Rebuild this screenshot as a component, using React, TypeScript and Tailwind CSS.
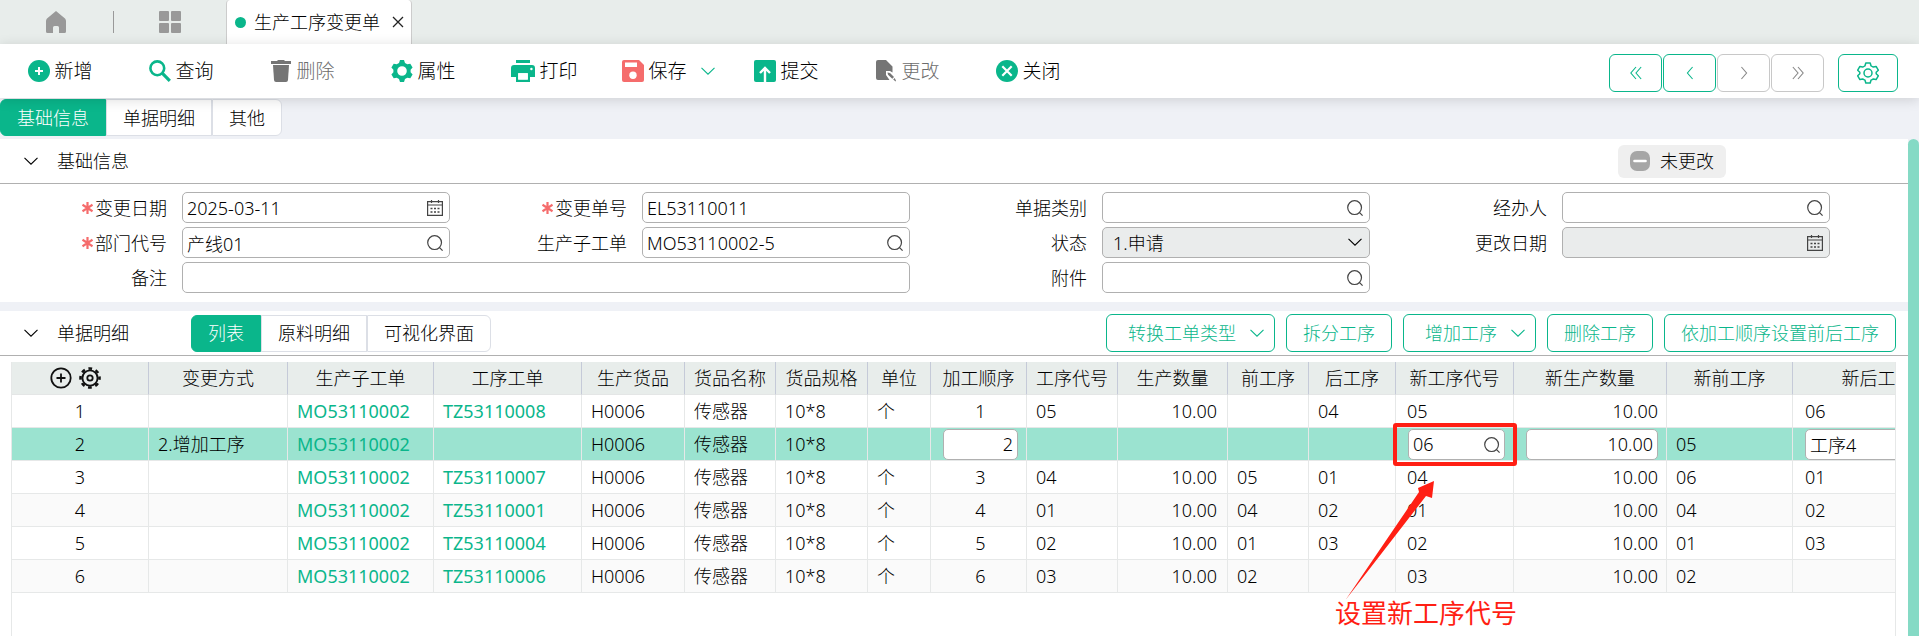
import { ReactNode } from 'react';
import { twMerge as tw } from 'tailwind-merge';

type IconProps = { className?: string };

const HomeIcon = () => (
    <svg className="w-[22px] h-6 text-[#999999]" viewBox="0 0 22 24" fill="currentColor">
        <path d="M11 1 L20 8.5 Q21 9.5 21 11 V21.5 Q21 23 19.5 23 H14 V17.5 Q14 16 12.5 16 H9.5 Q8 16 8 17.5 V23 H2.5 Q1 23 1 21.5 V11 Q1 9.5 2 8.5 Z" />
    </svg>
);

const GridIcon = () => (
    <svg className="w-6 h-6 text-[#999999]" viewBox="0 0 24 24" fill="currentColor">
        <rect x="1" y="1" width="10" height="10" rx="1" />
        <rect x="13" y="1" width="10" height="10" rx="1" />
        <rect x="1" y="13" width="10" height="10" rx="1" />
        <rect x="13" y="13" width="10" height="10" rx="1" />
    </svg>
);

const AddIcon = () => (
    <svg className="w-[22px] h-[22px]" viewBox="0 0 22 22">
        <circle cx="11" cy="11" r="11" fill="#0ab68b" />
        <path d="M11 7 V15 M7 11 H15" stroke="#fff" strokeWidth="2" />
    </svg>
);

const QueryIcon = () => (
    <svg className="w-[22px] h-[22px]" viewBox="0 0 22 22" fill="none" stroke="#0ab68b">
        <circle cx="8.3" cy="8.3" r="6.9" strokeWidth="2.6" />
        <path d="M13.2 13.2 L20.8 20.8" strokeWidth="3.2" />
    </svg>
);

const TrashIcon = () => (
    <svg className="w-[22px] h-[22px]" viewBox="0 0 22 22" fill="#757575">
        <path d="M1 1 H7 L8 0 H14 L15 1 H21 V4 H1 Z" />
        <path d="M3 5 H19 L18 20 Q17.8 22 16 22 H6 Q4.2 22 4 20 Z" />
    </svg>
);

const GearIcon = () => (
    <svg className="w-[22px] h-[22px]" viewBox="0 0 22 22" fill="#0ab68b">
        <path
            fillRule="evenodd"
            d="M9 0 H13 L14 3 L16.3 4.3 L19.3 3.7 L21.6 7.6 L19.6 9.8 V12.2 L21.6 14.4 L19.3 18.3 L16.3 17.7 L14 19 L13 22 H9 L8 19 L5.7 17.7 L2.7 18.3 L0.4 14.4 L2.4 12.2 V9.8 L0.4 7.6 L2.7 3.7 L5.7 4.3 L8 3 Z M11 6.2 A4.8 4.8 0 1 0 11 15.8 A4.8 4.8 0 1 0 11 6.2 Z"
        />
    </svg>
);

const PrintIcon = () => (
    <svg className="w-6 h-[22px]" viewBox="0 0 24 22" fill="#0ab68b">
        <rect x="5" y="0" width="14" height="3" />
        <path d="M3 5 H21 Q24 5 24 8 V17 H19 V13 H5 V17 H0 V8 Q0 5 3 5 Z" />
        <path d="M5 11 H19 V22 H5 Z M7.2 13.2 V19.6 H16.8 V13.2 Z" fillRule="evenodd" />
        <rect x="7.2" y="13.2" width="9.6" height="6.4" fill="#fff" />
        <circle cx="20.4" cy="9" r="1.2" fill="#fff" />
    </svg>
);

const SaveIcon = () => (
    <svg className="w-[22px] h-[22px]" viewBox="0 0 22 22">
        <path d="M2 0 H17 L22 5 V20 Q22 22 20 22 H2 Q0 22 0 20 V2 Q0 0 2 0 Z" fill="#f56c6c" />
        <rect x="3" y="2.5" width="12" height="4.5" fill="#fff" />
        <circle cx="11" cy="15.3" r="3.7" fill="#fff" />
    </svg>
);

const SubmitIcon = () => (
    <svg className="w-[22px] h-[22px]" viewBox="0 0 22 22">
        <rect width="22" height="22" rx="2" fill="#0ab68b" />
        <path d="M11 22 V9 M6 13 L11 8 L16 13" fill="none" stroke="#fff" strokeWidth="2.4" />
    </svg>
);

const ChangeIcon = () => (
    <svg className="w-[22px] h-[22px]" viewBox="0 0 22 22">
        <path d="M3 0 H11 L17.5 6.5 V12.5 L15 11 H11 V15 L14.5 20 H3 Q1 20 1 18 V2 Q1 0 3 0 Z" fill="#757575" />
        <path d="M12.5 12.5 L15 13 L19 17 L17.3 18.8 L13 14.8 Z M18.2 19.4 L19.7 18 L21 20.8 L20.6 21.5 Z" fill="#757575" />
    </svg>
);

const CloseIcon = () => (
    <svg className="w-[22px] h-[22px]" viewBox="0 0 22 22">
        <circle cx="11" cy="11" r="11" fill="#0ab68b" />
        <path d="M6.3 6.3 L15.7 15.7 M15.7 6.3 L6.3 15.7" stroke="#fff" strokeWidth="2.2" />
    </svg>
);

const ChevronDown = ({ className }: IconProps) => (
    <svg className={tw('w-[14px] h-[14px] shrink-0', className)} viewBox="0 0 14 14" fill="none" stroke="currentColor">
        <path d="M0.5 3.8 L7 10.2 L13.5 3.8" strokeWidth="1.1" />
    </svg>
);

const SearchIcon = ({ className }: IconProps) => (
    <svg className={tw('w-4 h-4 text-[#444444]', className)} viewBox="0 0 16 16" fill="none" stroke="currentColor">
        <circle cx="7.6" cy="7.6" r="6.9" strokeWidth="1.2" />
        <path d="M12.3 12.3 L15.6 15.6" strokeWidth="1.2" />
    </svg>
);

const CalendarIcon = ({ className }: IconProps) => (
    <svg className={tw('w-4 h-4 text-[#444444]', className)} viewBox="0 0 16 16" fill="none" stroke="currentColor">
        <path d="M0.6 1.6 H15.4 V15.4 H0.6 Z M0.6 5 H15.4 M4.5 0 V3 M11.5 0 V3" strokeWidth="1.2" />
        <path d="M3.5 8.5 H12.5 M3.5 12 H12.5" strokeWidth="1.6" strokeDasharray="2 1.5" />
    </svg>
);

const OutlineGear = () => (
    <svg className="w-[22px] h-[22px]" viewBox="0 0 22 22" fill="none" stroke="#0ab68b" strokeWidth="1.5">
        <path
            d="M8.8 1 H13.2 L14 3.8 Q15.2 4.4 16.3 5.1 L19.1 4.4 L21.3 8.2 L19.2 10.2 V11.8 L21.3 13.8 L19.1 17.6 L16.3 16.9 Q15.2 17.6 14 18.2 L13.2 21 H8.8 L8 18.2 Q6.8 17.6 5.7 16.9 L2.9 17.6 L0.7 13.8 L2.8 11.8 V10.2 L0.7 8.2 L2.9 4.4 L5.7 5.1 Q6.8 4.4 8 3.8 Z"
            strokeLinejoin="round"
        />
        <circle cx="11" cy="11" r="4" />
    </svg>
);

const tools: { label: string; icon: ReactNode; disabled?: boolean; menu?: boolean }[] = [
    { label: '新增', icon: <AddIcon /> },
    { label: '查询', icon: <QueryIcon /> },
    { label: '删除', icon: <TrashIcon />, disabled: true },
    { label: '属性', icon: <GearIcon /> },
    { label: '打印', icon: <PrintIcon /> },
    { label: '保存', icon: <SaveIcon />, menu: true },
    { label: '提交', icon: <SubmitIcon /> },
    { label: '更改', icon: <ChangeIcon />, disabled: true },
    { label: '关闭', icon: <CloseIcon /> },
];

const pagers = [
    { label: '首张', path: 'M7 1 L1 8 L7 15 M13 1 L7 8 L13 15' },
    { label: '上一张', path: 'M10 1 L4 8 L10 15' },
    { label: '下一张', path: 'M4 1 L10 8 L4 15', disabled: true },
    { label: '末张', path: 'M1 1 L7 8 L1 15 M7 1 L13 8 L7 15', disabled: true },
];

type FieldProps = {
    id: string;
    label: string;
    value?: string;
    required?: boolean;
    disabled?: boolean;
    icon?: 'search' | 'calendar';
    wide?: boolean;
};

const Field = ({ id, label, value = '', required, disabled, icon, wide }: FieldProps) => (
    <div className={tw('flex items-center gap-[15px] pr-[10px]', wide && 'col-span-2')}>
        <label htmlFor={id} className="flex w-[167px] shrink-0 items-center justify-end gap-[2px] whitespace-nowrap">
            {required && (
                <svg className="w-[11px] h-3" viewBox="0 0 11 12" stroke="#f56c6c" strokeWidth="2.2">
                    <path d="M5.5 0 V12 M0.5 2.8 L10.5 9.2 M10.5 2.8 L0.5 9.2" />
                </svg>
            )}
            {label}
        </label>
        <div className="relative flex-1">
            <input
                id={id}
                type="text"
                defaultValue={value}
                disabled={disabled}
                className="block w-full h-[31px] rounded-[5px] border border-[#b0b0b0] bg-white pl-1 pr-8 outline-none disabled:bg-[#eaecec]"
            />
            {icon === 'search' && <SearchIcon className="absolute right-[7px] top-2" />}
            {icon === 'calendar' && <CalendarIcon className="absolute right-[7px] top-2" />}
        </div>
    </div>
);

const Segmented = ({ items }: { items: string[] }) => (
    <div className="flex h-[37px]">
        {items.map((item, i) => (
            <button
                key={item}
                type="button"
                className={tw(
                    'border border-l-white border-[#dcdfe6] bg-white px-4 whitespace-nowrap last:rounded-r-md',
                    i === 0 && 'rounded-l-md border-[#0ab68b] border-l-[#0ab68b] bg-[#0ab68b] text-white',
                )}
            >
                {item}
            </button>
        ))}
    </div>
);

const ActionButton = ({ label, menu }: { label: string; menu?: boolean }) => (
    <button
        type="button"
        className={tw(
            'flex h-[38px] items-center rounded-md border border-[#0ab68b] px-4 text-[#0ab68b] whitespace-nowrap',
            menu && 'gap-[14px] pl-[21px] pr-[10px]',
        )}
    >
        {label}
        {menu && <ChevronDown />}
    </button>
);

const columns = [
    { title: '变更方式', col: 'w-[139px]' },
    { title: '生产子工单', col: 'w-[146px]', cell: 'font-normal text-[#0ab68b]' },
    { title: '工序工单', col: 'w-[148px]', cell: 'font-normal text-[#0ab68b]' },
    { title: '生产货品', col: 'w-[103px]' },
    { title: '货品名称', col: 'w-[91px]' },
    { title: '货品规格', col: 'w-[92px]' },
    { title: '单位', col: 'w-[63px]' },
    { title: '加工顺序', col: 'w-[96px]', cell: 'text-center pl-1' },
    { title: '工序代号', col: 'w-[91px]' },
    { title: '生产数量', col: 'w-[110px]', cell: 'text-right pr-[10px]' },
    { title: '前工序', col: 'w-[81px]' },
    { title: '后工序', col: 'w-[87px]' },
    { title: '新工序代号', col: 'w-[118px]', cell: 'pl-[11px]' },
    { title: '新生产数量', col: 'w-[153px]', cell: 'text-right pr-2' },
    { title: '新前工序', col: 'w-[126px]' },
    { title: '新后工序', col: 'w-[170px]', cell: 'pl-3' },
];

const rows = [
    ['', 'MO53110002', 'TZ53110008', 'H0006', '传感器', '10*8', '个', '1', '05', '10.00', '', '04', '05', '10.00', '', '06'],
    ['2.增加工序', 'MO53110002', '', 'H0006', '传感器', '10*8', '', '2', '', '', '', '', '06', '10.00', '05', '工序4'],
    ['', 'MO53110002', 'TZ53110007', 'H0006', '传感器', '10*8', '个', '3', '04', '10.00', '05', '01', '04', '10.00', '06', '01'],
    ['', 'MO53110002', 'TZ53110001', 'H0006', '传感器', '10*8', '个', '4', '01', '10.00', '04', '02', '01', '10.00', '04', '02'],
    ['', 'MO53110002', 'TZ53110004', 'H0006', '传感器', '10*8', '个', '5', '02', '10.00', '01', '03', '02', '10.00', '01', '03'],
    ['', 'MO53110002', 'TZ53110006', 'H0006', '传感器', '10*8', '个', '6', '03', '10.00', '02', '', '03', '10.00', '02', ''],
];

const activeRow = 1;
const editable = ['加工顺序', '新工序代号', '新生产数量', '新后工序'];

const CellInput = ({ title, value }: { title: string; value: string }) => (
    <div className="relative">
        <input
            type="text"
            aria-label={title}
            defaultValue={value}
            className={tw(
                'block w-full h-[31px] rounded-[5px] border border-[#b0b0b0] bg-white px-1 text-black outline-none',
                (title === '加工顺序' || title === '新生产数量') && 'text-right',
            )}
        />
        {title === '新工序代号' && <SearchIcon className="absolute right-[5px] top-2" />}
    </div>
);

const DetailTable = () => (
    <table className="w-[1951px] table-fixed border-separate border-spacing-0">
        <thead>
            <tr className="h-[33px] bg-[#e8edeb]">
                <th className="w-[137px] border-r border-b border-r-[#c5cad8] border-b-[#e4e6e6] p-0">
                    <div className="flex items-center justify-center gap-[7px] pr-[10px]">
                        <button type="button" aria-label="新增行">
                            <svg className="w-[22px] h-[22px]" viewBox="0 0 22 22" fill="none" stroke="#111">
                                <circle cx="11" cy="11" r="9.7" strokeWidth="1.8" />
                                <path d="M11 6.5 V15.5 M6.5 11 H15.5" strokeWidth="1.8" />
                            </svg>
                        </button>
                        <button type="button" aria-label="表格设置">
                            <svg className="w-[22px] h-[22px]" viewBox="0 0 22 22" fill="none" stroke="#111">
                                <circle cx="11" cy="11" r="7.6" strokeWidth="1.9" />
                                <circle cx="11" cy="11" r="2.7" strokeWidth="1.8" />
                                <circle cx="11" cy="11" r="9.5" strokeWidth="2.6" strokeDasharray="3.73 3.73" strokeDashoffset="1.86" />
                            </svg>
                        </button>
                    </div>
                </th>
                {columns.map(({ title, col }) => (
                    <th
                        key={title}
                        className={tw(
                            'border-r border-b border-r-[#c5cad8] border-b-[#e4e6e6] p-0 font-light whitespace-nowrap',
                            col,
                        )}
                    >
                        {title}
                    </th>
                ))}
            </tr>
        </thead>
        <tbody>
            {rows.map((row, r) => (
                <tr
                    key={r}
                    className={tw(
                        'h-[33px]',
                        r > activeRow && r % 2 === 1 && 'bg-[#fafafa]',
                        r === activeRow && 'bg-[#9be3d0]',
                    )}
                >
                    <td className="border-r border-b border-[#e6e8e8] p-0 text-center">{r + 1}</td>
                    {columns.map(({ title, cell }, c) => {
                        const isInput = r === activeRow && editable.includes(title);
                        return (
                            <td
                                key={title}
                                className={tw(
                                    'border-r border-b border-[#e6e8e8] p-0 pl-[9px] whitespace-nowrap',
                                    cell,
                                    isInput && 'pl-3 pr-2',
                                )}
                            >
                                {isInput ? <CellInput title={title} value={row[c]} /> : row[c]}
                            </td>
                        );
                    })}
                </tr>
            ))}
        </tbody>
    </table>
);

const Annotation = () => (
    <>
        <div className="absolute left-[1381px] top-[61px] w-[124px] h-[43px] rounded-[3px] border-4 border-[#ff1f14]" />
        <svg className="absolute left-[1333px] top-[118px] w-[92px] h-[122px]" viewBox="0 0 92 122" fill="#ff1f14">
            <path d="M0.5 120 L74 12 L73 8 L89 1 L87 18 L81 16 Z" />
        </svg>
        <div className="absolute left-[1323px] top-[234px] text-[26px] leading-[34px] font-normal text-[#ff1f14] whitespace-nowrap">
            设置新工序代号
        </div>
    </>
);

const App = () => {
    return (
        <div className="flex flex-col h-screen overflow-hidden bg-[#eff1f6] text-[18px] leading-6 font-light text-black font-['Noto_Sans','Noto_Sans_CJK_SC',sans-serif]">
            <nav className="flex h-11 shrink-0 items-center bg-[#e8edeb]">
                <div className="flex w-[226px] items-center pl-[45px]">
                    <a href="#home" aria-label="首页">
                        <HomeIcon />
                    </a>
                    <div className="ml-[46px] h-[22px] w-px bg-[#999999]" />
                    <a href="#apps" aria-label="应用" className="ml-[44px]">
                        <GridIcon />
                    </a>
                </div>
                <div className="flex h-full items-center rounded-t-sm border-x border-[#cccccc] bg-white pl-2 pr-[7px]">
                    <div className="h-[11px] w-[11px] rounded-full bg-[#0ab68b]" />
                    <a href="#change-order" className="ml-2 whitespace-nowrap">
                        生产工序变更单
                    </a>
                    <button type="button" aria-label="关闭标签" className="ml-3">
                        <svg className="w-3 h-3" viewBox="0 0 12 12" stroke="#222" strokeWidth="1.3">
                            <path d="M1 1 L11 11 M11 1 L1 11" />
                        </svg>
                    </button>
                </div>
            </nav>

            <header className="relative z-10 flex h-[54px] shrink-0 items-center justify-between bg-white pr-[21px] shadow-[0_2px_12px_rgba(0,0,0,0.14)]">
                <div className="flex h-full items-center">
                    {tools.map(({ label, icon, disabled, menu }) => (
                        <button
                            key={label}
                            type="button"
                            disabled={disabled}
                            className={tw(
                                'flex w-[121px] items-center justify-center gap-1 text-[19px] text-black disabled:text-[#6c6c6c] whitespace-nowrap',
                                menu && 'pl-[6px]',
                            )}
                        >
                            {icon}
                            {label}
                            {menu && <ChevronDown className="ml-[10px] text-[#0ab68b]" />}
                        </button>
                    ))}
                </div>
                <div className="flex items-center gap-[1px] pt-1">
                    {pagers.map(({ label, path, disabled }) => (
                        <button
                            key={label}
                            type="button"
                            aria-label={label}
                            disabled={disabled}
                            className="flex h-[38px] w-[53px] items-center justify-center rounded-md border border-[#0ab68b] text-[#0ab68b] disabled:border-[#c8c8c8] disabled:text-[#888888]"
                        >
                            <svg className="w-3 h-[14px]" viewBox="0 0 14 16" fill="none" stroke="currentColor" strokeWidth="1.3">
                                <path d={path} />
                            </svg>
                        </button>
                    ))}
                    <button
                        type="button"
                        aria-label="设置"
                        className="ml-[13px] flex h-[38px] w-[60px] items-center justify-center rounded-md border border-[#0ab68b]"
                    >
                        <OutlineGear />
                    </button>
                </div>
            </header>

            <div className="flex h-[41px] shrink-0 items-center pb-[2px]">
                <Segmented items={['基础信息', '单据明细', '其他']} />
            </div>

            <div className="flex flex-1">
                <main className="flex min-w-0 flex-1 flex-col">
                    <section className="bg-white pb-[9px]">
                        <div className="flex h-[45px] items-center border-b border-[#b0b0b0] pl-6">
                            <ChevronDown />
                            <h2 className="ml-[19px]">基础信息</h2>
                            <div className="ml-auto mr-[182px] flex h-[33px] items-center gap-[10px] rounded-md bg-[#efefef] px-3">
                                <svg className="w-5 h-5" viewBox="0 0 20 20">
                                    <rect width="20" height="20" rx="7" fill="#a6a6a6" />
                                    <path d="M4.5 10 H15.5" stroke="#fff" strokeWidth="2.6" strokeLinecap="round" />
                                </svg>
                                未更改
                            </div>
                        </div>
                        <div className="mt-2 grid grid-cols-4 gap-y-1 pr-[68px]">
                            <Field id="change-date" label="变更日期" value="2025-03-11" icon="calendar" required />
                            <Field id="change-no" label="变更单号" value="EL53110011" required />
                            <Field id="doc-type" label="单据类别" icon="search" />
                            <Field id="handler" label="经办人" icon="search" />
                            <Field id="dept" label="部门代号" value="产线01" icon="search" required />
                            <Field id="sub-order" label="生产子工单" value="MO53110002-5" icon="search" />
                            <div className="flex items-center gap-[15px] pr-[10px]">
                                <label htmlFor="status" className="w-[167px] shrink-0 text-right">
                                    状态
                                </label>
                                <div className="relative flex-1">
                                    <select
                                        id="status"
                                        disabled
                                        className="block h-[31px] w-full appearance-none rounded-[5px] border border-[#b0b0b0] bg-[#eaecec] pl-[10px] opacity-100"
                                    >
                                        <option>1.申请</option>
                                    </select>
                                    <ChevronDown className="absolute right-2 top-2" />
                                </div>
                            </div>
                            <Field id="modify-date" label="更改日期" icon="calendar" disabled />
                            <Field id="remark" label="备注" wide />
                            <Field id="attachment" label="附件" icon="search" />
                        </div>
                    </section>

                    <section className="mt-[9px] flex flex-1 flex-col bg-white">
                        <div className="flex h-[45px] shrink-0 items-center border-b border-[#b0b0b0] pl-6 pr-3">
                            <ChevronDown />
                            <h2 className="ml-[19px] mr-[62px] whitespace-nowrap">单据明细</h2>
                            <Segmented items={['列表', '原料明细', '可视化界面']} />
                            <div className="ml-auto flex gap-[11px]">
                                <ActionButton label="转换工单类型" menu />
                                <ActionButton label="拆分工序" />
                                <ActionButton label="增加工序" menu />
                                <ActionButton label="删除工序" />
                                <ActionButton label="依加工顺序设置前后工序" />
                            </div>
                        </div>
                        <div className="relative ml-[11px] mr-3 mt-[6px] flex-1 overflow-hidden border-x border-[#e6e8e8]">
                            <DetailTable />
                            <Annotation />
                        </div>
                    </section>
                </main>
                <div className="w-[11px] shrink-0 rounded-t-full bg-[#85dac5]" />
            </div>
        </div>
    );
};

export default App;
